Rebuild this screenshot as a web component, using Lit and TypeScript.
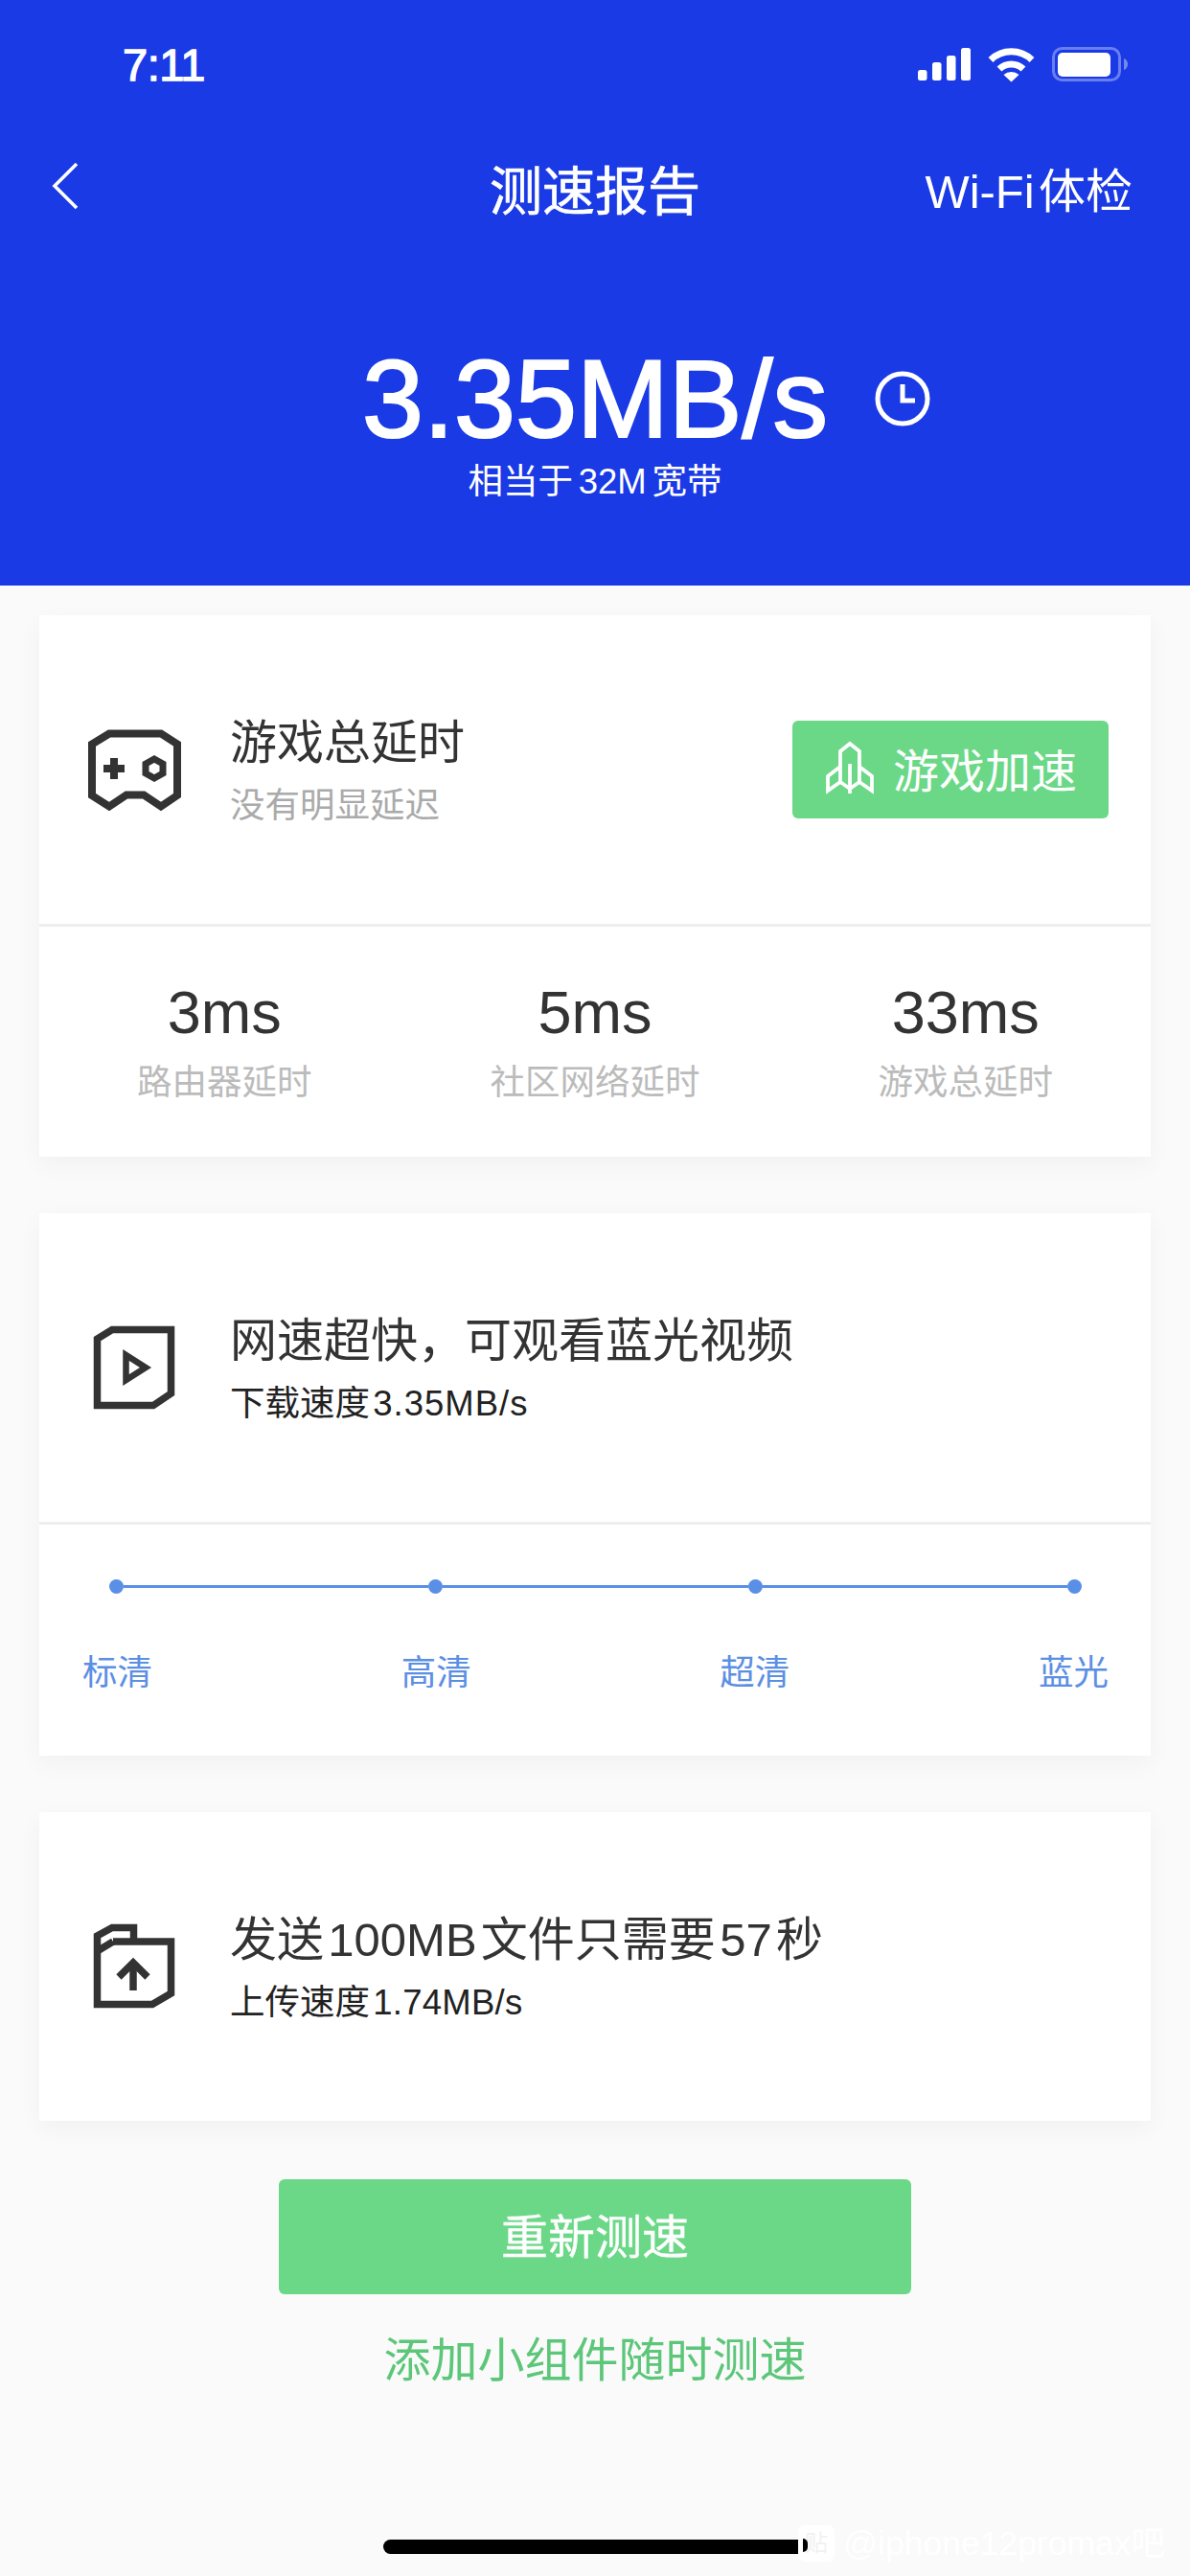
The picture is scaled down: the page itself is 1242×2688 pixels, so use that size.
import { LitElement, html, css, svg } from "lit";
import { customElement } from "lit/decorators.js";

const gamepad = svg`<svg class="ico" width="110" height="100" viewBox="85 752 110 100" fill="none" stroke="#333" stroke-width="8">
  <path d="M114 764.500H168L185 775.500V829L168 840.500L150 828.500H132L114 840.500L96 829V775.500Z"/>
  <path d="M119 790V812M108 801H130" stroke-width="8"/>
  <path d="M161 791L170 796V806L161 811L152 806V796Z" stroke-width="7"/>
</svg>`;
const rocket = svg`<svg class="rocket" width="54" height="56" viewBox="860 774 54 56" fill="none" stroke="#fff" stroke-width="3.800">
  <path d="M877 817V785L887 777L897 785V817"/>
  <path d="M887 798V829"/>
  <path d="M877 801L864 811V826L877 817L887 824L897 817L910 826V811L897 801"/>
</svg>`;
const play = svg`<svg class="ico" width="110" height="100" viewBox="85 1378 110 100" fill="none" stroke="#333" stroke-width="7.500">
  <path d="M117 1388.500H178.500V1455L160 1467.500H101.500V1398Z"/>
  <path d="M131.500 1415V1441L152 1428Z" stroke-width="6.500"/>
</svg>`;
const upload = svg`<svg class="ico" width="110" height="100" viewBox="85 2002 110 100" fill="none" stroke="#333" stroke-width="7.500">
  <path d="M118 2026H178.500V2080L159 2091.500H101.500V2020L117 2011.500H139.500V2026"/>
  <path d="M101.500 2036L118 2026" />
  <path d="M139 2050V2077" />
  <path d="M124 2063L139 2048L154 2063" />
</svg>`;

@customElement("app-root")
export class AppRoot extends LitElement {
  static styles = css`
    :host {
      display: block;
      position: relative;
      width: 1242px;
      height: 2688px;
      overflow: hidden;
      background: #fafafa;
      color: #333;
      font-family: "Liberation Sans", "Noto Sans CJK SC", sans-serif;
    }
    svg { display: block; }

    .head, .sub, .wifi-check { word-spacing: -0.19em; }
    .equiv { word-spacing: -0.12em; }
    .num { letter-spacing: 1px; }
    .num.tight { letter-spacing: 0.25px; }

    .header { height: 611px; background: #1a3ae6; color: #fff; }
    .status {
      height: 134px;
      display: flex;
      align-items: center;
      justify-content: space-between;
      padding: 0 65px 0 128px;
      box-sizing: border-box;
    }
    .time { font-size: 47px; font-weight: 500; letter-spacing: -0.5px; -webkit-text-stroke: 1.300px #fff; }
    .nav {
      height: 122px;
      display: grid;
      grid-template-columns: 1fr auto 1fr;
      align-items: center;
      padding: 0 60px;
    }
    .back { margin: -3px 0 0 -7px; }
    .title { font-size: 55px; -webkit-text-stroke: 0.700px #fff; }
    .wifi-check { font-size: 49px; justify-self: end; }
    .speed-row {
      margin-top: 98px;
      display: grid;
      grid-template-columns: 1fr auto 1fr;
      align-items: center;
    }
    .speed { font-size: 115px; line-height: 124px; -webkit-text-stroke: 2.200px #fff; }
    .clock { margin-left: 49px; }
    .equiv { text-align: center; font-size: 36.500px; line-height: 50px; }

    .main { display: flex; flex-direction: column; gap: 59px; padding: 31px 41px 0; }
    .card { background: #fff; box-shadow: 0 8px 24px rgba(0, 0, 0, 0.04); }
    .row {
      height: 322px;
      display: flex;
      align-items: center;
      padding: 0 44px 0 44px;
      box-sizing: border-box;
    }
    .ico { flex: none; }
    .text { margin-left: 45px; padding-top: 3px; flex: 1; display: flex; flex-direction: column; gap: 12px; }
    .head { font-size: 49px; line-height: 60px; color: #333; }
    .sub { font-size: 36.500px; line-height: 48px; color: #222; }
    .sub.muted { color: #aaa; }
    .divider { height: 3px; background: #eeeeee; }

    .boost {
      width: 330px;
      height: 102px;
      display: flex;
      align-items: center;
      gap: 18px;
      padding-left: 33px;
      padding-bottom: 5px;
      box-sizing: border-box;
      background: #6bd887;
      color: #fff;
      border-radius: 6px;
      font-size: 48px;
    }

    .stats { height: 240px; display: grid; grid-template-columns: repeat(3, 1fr); padding-top: 54px; box-sizing: border-box; text-align: center; }
    .val { font-size: 63px; line-height: 70px; color: #333; }
    .lab { font-size: 36.500px; line-height: 50px; color: #bbb; margin-top: 14px; }

    .quality { height: 241px; box-sizing: border-box; padding-top: 57px; }
    .track { display: flex; align-items: center; padding: 0 72px 0 73px; }
    .dot { flex: none; width: 15px; height: 15px; border-radius: 50%; background: #5a8fe6; }
    .line { flex: 1; height: 3.500px; background: #5a8fe6; }
    .labels { display: flex; justify-content: space-between; padding: 0 44px 0 45px; margin-top: 58px; font-size: 36.500px; line-height: 50px; color: #5b8fe3; }

    .actions { display: flex; flex-direction: column; align-items: center; margin-top: 61px; }
    .again {
      width: 660px;
      height: 120px;
      padding-bottom: 8px;
      box-sizing: border-box;
      display: flex;
      align-items: center;
      justify-content: center;
      background: #6bd887;
      color: #fff;
      border-radius: 6px;
      font-size: 49px;
      -webkit-text-stroke: 0.400px #fff;
    }
    .widget { margin-top: 34px; font-size: 49px; line-height: 70px; color: #5cc679; }
    .home { margin-top: 152px; width: 442px; height: 15px; border-radius: 8px; background: #000; }

    .mark {
      position: absolute;
      left: 833px;
      top: 2635px;
      display: flex;
      align-items: center;
      gap: 9px;
      color: #fff;
      font-size: 35.500px;
      line-height: 38px;
      white-space: nowrap;
    }
    .mark-ico {
      width: 38px;
      height: 38px;
      border-radius: 7px;
      background: #fff;
      display: flex;
      align-items: center;
      justify-content: center;
      color: #f1f1f1;
      font-size: 24px;
      position: relative;
    }
    .sliver { position: absolute; left: 5px; top: 14px; width: 5px; height: 14px; border-radius: 0 5px 5px 0; background: #000; }
  `;

  render() {
    return html`
      <div class="header">
        <div class="status">
          <span class="time">7:11</span>
          <svg width="219" height="40" viewBox="958 47 219 40" fill="#fff">
            <rect x="958" y="73" width="9.500" height="11" rx="2.500"/>
            <rect x="973" y="65" width="9.500" height="19" rx="2.500"/>
            <rect x="988" y="58" width="9.500" height="26" rx="2.500"/>
            <rect x="1003" y="50" width="10" height="34" rx="2.500"/>
            <g fill="none" stroke="#fff" stroke-width="7">
              <path d="M1034 62.500A31 31 0 0 1 1077 62.500"/>
              <path d="M1043 72A18 18 0 0 1 1068 72"/>
            </g>
            <path d="M1047.500 78A12 12 0 0 1 1063.500 78L1055.500 85.500Z"/>
            <rect x="1099.500" y="50.500" width="69" height="33" rx="9" fill="none" stroke="#fff" stroke-opacity=".35" stroke-width="3"/>
            <rect x="1104" y="55" width="55" height="25" rx="5"/>
            <path d="M1173 61C1176 62 1177 64.500 1177 67S1176 72 1173 73Z" fill-opacity=".4"/>
          </svg>
        </div>
        <div class="nav">
          <svg class="back" width="30" height="50" viewBox="0 0 30 50" fill="none" stroke="#fff" stroke-width="3.600"><path d="M26 2L3 25L26 48" transform="translate(1 0)"/></svg>
          <span class="title">测速报告</span>
          <span class="wifi-check">Wi-Fi 体检</span>
        </div>
        <div class="speed-row">
          <span></span>
          <span class="speed">3.35MB/s</span>
          <svg class="clock" width="58" height="58" viewBox="0 0 58 58" fill="none" stroke="#fff" stroke-width="5"><circle cx="29" cy="29" r="26"/><path d="M29 14V31H42"/></svg>
        </div>
        <div class="equiv">相当于 32M 宽带</div>
      </div>

      <div class="main">
        <div class="card">
          <div class="row">
            ${gamepad}
            <div class="text"><div class="head">游戏总延时</div><div class="sub muted">没有明显延迟</div></div>
            <div class="boost">${rocket}<span>游戏加速</span></div>
          </div>
          <div class="divider"></div>
          <div class="stats">
            <div><div class="val">3ms</div><div class="lab">路由器延时</div></div>
            <div><div class="val">5ms</div><div class="lab">社区网络延时</div></div>
            <div><div class="val">33ms</div><div class="lab">游戏总延时</div></div>
          </div>
        </div>

        <div class="card">
          <div class="row">
            ${play}
            <div class="text"><div class="head">网速超快，可观看蓝光视频</div><div class="sub">下载速度 <span class="num">3.35MB/s</span></div></div>
          </div>
          <div class="divider"></div>
          <div class="quality">
            <div class="track">
              <div class="dot"></div><div class="line"></div>
              <div class="dot"></div><div class="line"></div>
              <div class="dot"></div><div class="line"></div>
              <div class="dot"></div>
            </div>
            <div class="labels"><span>标清</span><span>高清</span><span>超清</span><span>蓝光</span></div>
          </div>
        </div>

        <div class="card">
          <div class="row">
            ${upload}
            <div class="text"><div class="head">发送 100MB 文件只需要 57 秒</div><div class="sub">上传速度 <span class="num tight">1.74MB/s</span></div></div>
          </div>
        </div>
      </div>

      <div class="actions">
        <div class="again">重新测速</div>
        <div class="widget">添加小组件随时测速</div>
        <div class="home"></div>
      </div>

      <div class="mark">
        <span class="mark-ico">贴<i class="sliver"></i></span>
        <span>@iphone12promax吧</span>
      </div>
    `;
  }
}
